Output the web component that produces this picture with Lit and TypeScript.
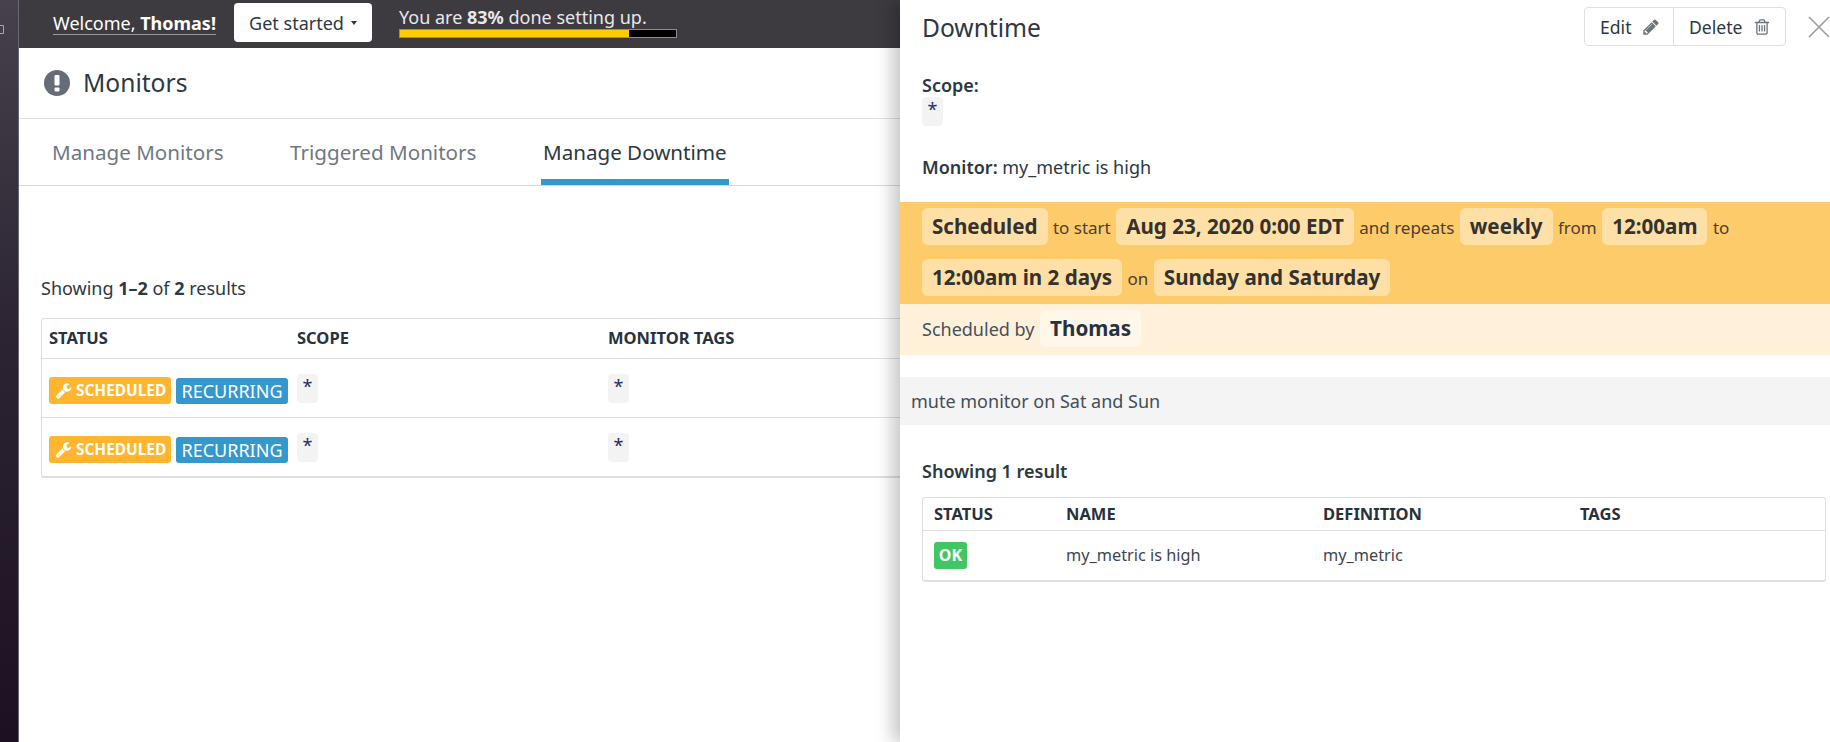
import { LitElement, html, css, svg } from "lit";
import { customElement } from "lit/decorators.js";

const wrench = svg`<path d="M448 1472q0-26-19-45t-45-19-45 19-19 45 19 45 45 19 45-19 19-45zm644-420l-682 682q-37 37-90 37-52 0-91-37l-106-108q-38-36-38-90 0-53 38-91l681-681q39 98 114.5 173.5t173.5 114.5zm634-435q0 39-23 106-47 134-164.5 217.5t-258.5 83.5q-185 0-316.5-131.5t-131.5-316.5 131.5-316.5 316.5-131.5q58 0 121.5 16.5t107.5 46.5q16 11 16 28t-16 28l-293 169v224l193 107q5-3 79-48.5t135.5-81 70.5-35.5q15 0 23.5 10t8.5 25z"/>`;
const pencil = svg`<path d="M491 1536l91-91-235-235-91 91v107h128v128h107zm523-928q0-22-22-22-10 0-17 7l-542 542q-7 7-7 17 0 22 22 22 10 0 17-7l542-542q7-7 7-17zm-54-192l416 416-832 832h-416v-416zm683 96q0 53-37 90l-166 166-416-416 166-165q36-38 90-38 53 0 91 38l235 234q37 39 37 91z"/>`;
const trash = svg`<path d="M704 736v576q0 14-9 23t-23 9h-64q-14 0-23-9t-9-23v-576q0-14 9-23t23-9h64q14 0 23 9t9 23zm256 0v576q0 14-9 23t-23 9h-64q-14 0-23-9t-9-23v-576q0-14 9-23t23-9h64q14 0 23 9t9 23zm256 0v576q0 14-9 23t-23 9h-64q-14 0-23-9t-9-23v-576q0-14 9-23t23-9h64q14 0 23 9t9 23zm128 724v-948h-896v948q0 22 7 40.5t14.5 27 10.5 8.5h832q3 0 10.5-8.5t14.5-27 7-40.5zm-672-1076h448l-48-117q-7-9-17-11h-317q-10 2-17 11zm928 32v64q0 14-9 23t-23 9h-96v948q0 83-47 143.5t-113 60.5h-832q-66 0-113-58.5t-47-141.5v-952h-96q-14 0-23-9t-9-23v-64q0-14 9-23t23-9h309l70-167q15-37 54-63t79-26h320q40 0 79 26t54 63l70 167h309q14 0 23 9t9 23z"/>`;

@customElement("app-root")
export class AppRoot extends LitElement {
  static styles = css`
    :host {
      display: block;
      position: relative;
      height: 742px;
      overflow: hidden;
      background: #fff;
      font-family: "Noto Sans", sans-serif;
      font-size: 18px;
      color: #2c3843;
    }
    .shell {
      display: flex;
      height: 100%;
    }
    .sidebar {
      width: 18px;
      flex: none;
      padding-top: 22px;
      box-sizing: content-box;
      height: calc(100% - 22px);
      border-right: 1px solid #6b6770;
      background: linear-gradient(#46414c, #2c2433 45%, #1c1122);
    }
    .sidebar svg {
      display: block;
      width: 4px;
      height: 12px;
      fill: none;
      stroke: #a8a5ab;
      stroke-width: 1;
    }
    .main {
      flex: 1;
      min-width: 0;
    }

    .topbar {
      height: 48px;
      background: #3d3a40;
      display: flex;
      align-items: center;
      padding-left: 34px;
      color: #fff;
    }
    .welcome {
      line-height: 21px;
      border-bottom: 1px solid #9a989c;
      margin-right: 18px;
    }
    .started {
      width: 138px;
      height: 39px;
      box-sizing: border-box;
      margin-right: 27px;
      margin-top: -3px;
      display: flex;
      align-items: center;
      justify-content: center;
      gap: 7px;
      background: #fff;
      color: #2c3843;
      border-radius: 4px;
    }
    .caret {
      width: 0;
      height: 0;
      border: 3px solid transparent;
      border-top: 4px solid #2c3843;
      border-bottom: 0;
    }
    .setup {
      color: #e8e8e8;
      margin-top: -5px;
    }
    .setup-text {
      line-height: 24px;
      display: block;
    }
    .progress {
      width: 278px;
      height: 9px;
      box-sizing: border-box;
      border: 1px solid #8d8b90;
      background: #000;
    }
    .progress-fill {
      height: 100%;
      background: #fc0;
    }

    .title-row {
      height: 70px;
      box-sizing: content-box;
      border-bottom: 1px solid #e0e0e0;
      display: flex;
      align-items: center;
      gap: 13px;
      padding-left: 25px;
      font-size: 24.6px;
    }
    .title-text {
      margin-top: -2px;
    }
    .title-row svg {
      width: 26px;
      height: 26px;
    }
    .tabs {
      height: 66px;
      border-bottom: 1px solid #d8d8d8;
      display: flex;
      gap: 62.5px;
      padding-left: 31px;
      font-size: 20.6px;
      color: #70787f;
    }
    .tab {
      padding: 0 2px;
      line-height: 66px;
      height: 60px;
    }
    .tab.active {
      color: #2c3843;
      border-bottom: 6px solid #3498cd;
    }

    .content {
      padding: 90px 0 0 22px;
    }
    .count {
      line-height: 24px;
      margin-bottom: 18px;
    }
    .table {
      border: 1px solid #dfdfdf;
      border-bottom-width: 2px;
      border-radius: 3px;
    }
    .row {
      display: grid;
      padding-left: 7px;
      border-top: 1px solid #dfdfdf;
    }
    .row:first-child {
      border-top: 0;
    }
    .left .row {
      grid-template-columns: 248px 311px 1fr;
      height: 58px;
      align-items: start;
    }
    .left .row.head {
      height: 39px;
      padding-bottom: 2px;
      box-sizing: border-box;
      align-items: center;
    }
    .head {
      font-size: 16.5px;
      font-weight: 700;
      text-transform: uppercase;
      color: #27323d;
    }
    .badges {
      display: flex;
      gap: 5px;
      align-items: flex-end;
      height: 45px;
    }
    .badge {
      display: flex;
      align-items: center;
      border-radius: 3px;
      color: #fff;
    }
    .sched {
      width: 122px;
      height: 27px;
      gap: 4px;
      padding-left: 6px;
      box-sizing: border-box;
      background: #ffb52e;
      font-size: 15.4px;
      font-weight: 700;
    }
    .sched svg {
      width: 17px;
      height: 17px;
      flex: none;
      fill: #fff;
    }
    .recur {
      width: 112px;
      height: 26px;
      justify-content: center;
      background: #3498cd;
      font-size: 18px;
    }
    .chip {
      display: inline-block;
      width: 21px;
      height: 29px;
      background: #f3f3f4;
      border-radius: 4px;
      color: #1e2f5e;
      text-align: center;
      line-height: 25px;
      font-size: 18px;
    }
    .left .chip {
      margin-top: 15px;
    }

    .panel {
      position: absolute;
      left: 900px;
      top: 0;
      right: 0;
      bottom: 0;
      background: #fff;
      box-shadow: -8px 0 16px rgba(0, 0, 0, 0.22);
    }
    .panel-head {
      height: 54px;
      display: flex;
      align-items: center;
      padding-left: 22px;
      font-size: 24.6px;
    }
    .panel-title {
      flex: 1;
    }
    .actions {
      width: 202px;
      height: 39px;
      box-sizing: border-box;
      margin-top: -1px;
      display: flex;
      border: 1px solid #dfe0e2;
      border-radius: 4px;
      font-size: 17.6px;
    }
    .action {
      display: flex;
      align-items: center;
      padding-left: 15px;
      gap: 10px;
    }
    .action.edit {
      width: 73px;
    }
    .action + .action {
      border-left: 1px solid #dfe0e2;
    }
    .action svg {
      width: 18px;
      height: 18px;
      flex: none;
      fill: #6b747c;
    }
    .close {
      width: 22px;
      height: 22px;
      margin-left: 22px;
      flex: none;
      stroke: #9a9da0;
      stroke-width: 1.6;
      fill: none;
    }
    .scope {
      padding: 19px 22px 0;
    }
    .scope b,
    .monitor b {
      font-weight: 600;
    }
    .scope-label {
      line-height: 24px;
      display: block;
    }
    .monitor {
      padding: 29px 22px 0;
      line-height: 24px;
      height: 47px;
    }
    .band {
      background: #fecb6b;
      padding: 0 22px;
      height: 102px;
      line-height: 51px;
      font-size: 17px;
      color: #4a4033;
    }
    .band .pill,
    .by .pill {
      display: inline-block;
      line-height: 37px;
      padding: 0 10px;
      border-radius: 6px;
      font-size: 20.6px;
      font-weight: 700;
      margin: 0 1px;
    }
    .band .pill {
      background: #fee0a6;
      color: #33322f;
    }
    .band .pill:first-child,
    .band .lead {
      margin-left: 0;
    }
    .by {
      background: #fff0da;
      height: 51px;
      line-height: 51px;
      padding: 0 22px;
      color: #46505a;
    }
    .by .pill {
      background: #fff7ea;
      color: #26323e;
    }
    .note {
      margin-top: 22px;
      height: 48px;
      line-height: 48px;
      padding-left: 11px;
      background: #f4f4f4;
      color: #444d56;
    }
    .results {
      padding: 34px 4px 0 22px;
    }
    .results-title {
      font-weight: 600;
      line-height: 24px;
      margin-bottom: 14px;
    }
    .right .row {
      grid-template-columns: 132px 257px 257px 1fr;
      padding-left: 11px;
      align-items: center;
    }
    .right .row.head {
      height: 32px;
      padding-bottom: 2px;
      box-sizing: border-box;
    }
    .right .row.body {
      height: 50px;
      padding-bottom: 1px;
      box-sizing: border-box;
      color: #3d4650;
      font-size: 16.3px;
    }
    .right .table {
      border-color: #dfe0e4;
      border-bottom-width: 3px;
      border-radius: 4px;
    }
    .ok {
      width: 33px;
      height: 27px;
      justify-content: center;
      background: #40c764;
      font-size: 16px;
      font-weight: 700;
    }
  `;

  private statusRow() {
    return html`<div class="row">
      <div class="badges">
        <span class="badge sched"><svg viewBox="0 0 1792 1792">${wrench}</svg>SCHEDULED</span>
        <span class="badge recur">RECURRING</span>
      </div>
      <div><span class="chip">*</span></div>
      <div><span class="chip">*</span></div>
    </div>`;
  }

  render() {
    return html`
      <div class="shell">
        <div class="sidebar">
          <svg viewBox="0 0 4 12"><path d="M-2 3.5H3.5V11.5H-2"></path></svg>
        </div>
        <div class="main">
          <div class="topbar">
            <span class="welcome">Welcome, <b>Thomas!</b></span>
            <span class="started">Get started <i class="caret"></i></span>
            <div class="setup">
              <span class="setup-text">You are <b>83%</b> done setting up.</span>
              <div class="progress"><div class="progress-fill" style="width: 83%"></div></div>
            </div>
          </div>
          <div class="title-row">
            <svg viewBox="0 0 26 26">
              <circle cx="13" cy="13" r="13" fill="#646d75"></circle>
              <rect x="10.5" y="5" width="5" height="10.5" rx="1" fill="#fff"></rect>
              <rect x="10.5" y="17.5" width="5" height="4" rx="1" fill="#fff"></rect>
            </svg>
            <span class="title-text">Monitors</span>
          </div>
          <div class="tabs">
            <div class="tab">Manage Monitors</div>
            <div class="tab">Triggered Monitors</div>
            <div class="tab active">Manage Downtime</div>
          </div>
          <div class="content">
            <div class="count">Showing <b>1–2</b> of <b>2</b> results</div>
            <div class="table left">
              <div class="row head">
                <div>Status</div>
                <div>Scope</div>
                <div>Monitor Tags</div>
              </div>
              ${this.statusRow()} ${this.statusRow()}
            </div>
          </div>
        </div>
      </div>

      <aside class="panel">
        <div class="panel-head">
          <span class="panel-title">Downtime</span>
          <div class="actions">
            <div class="action edit">Edit <svg viewBox="0 0 1792 1792">${pencil}</svg></div>
            <div class="action">Delete <svg viewBox="0 0 1792 1792">${trash}</svg></div>
          </div>
          <svg class="close" viewBox="0 0 22 22"><path d="M1 1l20 20M21 1L1 21"></path></svg>
        </div>
        <div class="scope">
          <b class="scope-label">Scope:</b>
          <span class="chip">*</span>
        </div>
        <div class="monitor"><b>Monitor:</b> my_metric is high</div>
        <div class="band">
          <span class="pill">Scheduled</span> to start
          <span class="pill">Aug 23, 2020 0:00 EDT</span> and repeats
          <span class="pill">weekly</span> from
          <span class="pill">12:00am</span> to
          <span class="pill lead">12:00am in 2 days</span> on
          <span class="pill">Sunday and Saturday</span>
        </div>
        <div class="by">Scheduled by <span class="pill">Thomas</span></div>
        <div class="note">mute monitor on Sat and Sun</div>
        <div class="results">
          <div class="results-title">Showing 1 result</div>
          <div class="table right">
            <div class="row head">
              <div>Status</div>
              <div>Name</div>
              <div>Definition</div>
              <div>Tags</div>
            </div>
            <div class="row body">
              <div><span class="badge ok">OK</span></div>
              <div>my_metric is high</div>
              <div>my_metric</div>
              <div></div>
            </div>
          </div>
        </div>
      </aside>
    `;
  }
}
